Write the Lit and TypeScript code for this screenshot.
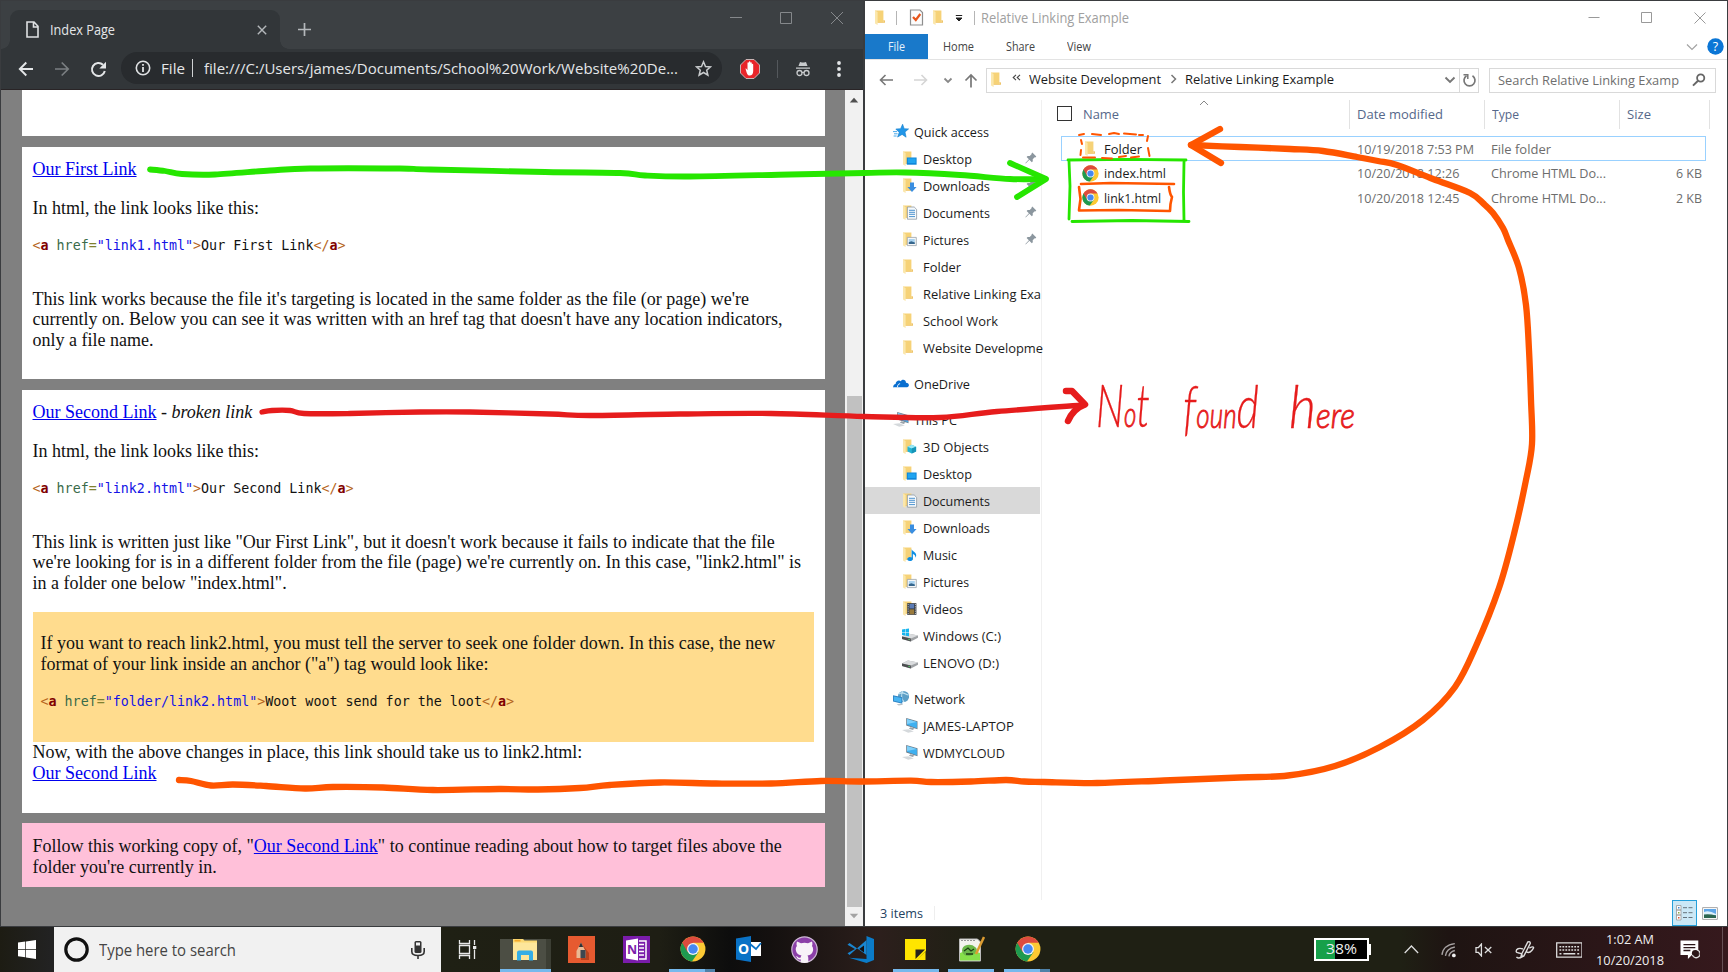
import { LitElement, html, svg, css, nothing } from "lit";
import { customElement, property } from "lit/decorators.js";

/** Single line of text, condensed or stretched to a given width. */
@customElement("fit-text")
class FitText extends LitElement {
  @property() text = "";
  @property({ type: Number }) w = 0;
  static styles = css`
    :host { display: inline-block; white-space: nowrap; flex: none; }
    span { display: inline-block; transform-origin: 0 50%; }
  `;
  updated() {
    const s = this.renderRoot.querySelector("span") as HTMLElement;
    const n = s.getBoundingClientRect().width;
    if (this.w && n) {
      s.style.transform = `scaleX(${this.w / n})`;
      this.style.width = `${this.w}px`;
    }
  }
  render() { return html`<span>${this.text}</span>`; }
}

const ft = (text: string, w: number) => html`<fit-text .text=${text} .w=${w}></fit-text>`;

const folderShape = svg`
  <path d="M1 1.500h8.400v11.800H1z" fill="#f6d277"/>
  <path d="M1 1.500l2.600 1.400v13L1 14.400z" fill="#fbe7ac"/>
  <path d="M9.400 11l1.600.4v2.400H3.600v-.8h5.800z" fill="#eec468"/>`;

const overlays: Record<string, unknown> = {
  folder: nothing,
  desktop: svg`<path d="M4.800 7.500h9.800v7.200H4.800z" fill="#0d84d8"/><path d="M5.800 8.400h7.800v4.700H5.800z" fill="#20a4f0"/>`,
  downloads: svg`<path d="M8 5.600h4V10h2.600L10 15 5.400 10H8z" fill="#3a8ee0"/>`,
  documents: svg`<path d="M5.400 3h6.800l2.400 2.400v9.800H5.400z" fill="#f7fafc" stroke="#8b98a3" stroke-width=".8"/><path d="M7 6.300h6M7 8.300h6M7 10.300h6M7 12.600h6" stroke="#4c93cf" stroke-width="1"/>`,
  pictures: svg`<path d="M5.300 6.400h9v8.200h-9z" fill="#f7f7f7" stroke="#9aa3aa" stroke-width=".8"/><path d="M6.800 8h6v5h-6z" fill="#a9d2ef"/><path d="M6.800 13v-1.700l2.500-1 3.500 1.200V13z" fill="#35658c"/>`,
  objects: svg`<path d="M5.500 8.800l4.300-2 4.300 2v4.600l-4.300 2-4.300-2z" fill="#22b3d4"/><path d="M5.500 8.800l4.300 1.600 4.300-1.600-4.300-2z" fill="#9be8f4"/><path d="M9.800 10.400l4.300-1.600v4.600l-4.300 2z" fill="#1794b7"/>`,
  music: svg`<path d="M9.600 3c.6 2.600 4.600 3 4.600 6.200 0 1.500-.9 2.400-.9 2.400.4-2-1-3-2.400-3.500v4.600c0 1.500-1.400 2.400-3 2.400s-2.600-.9-2.600-2 1.100-2.100 2.600-2.100c.7 0 1.300.2 1.700.5z" fill="#0d8ee4"/>`,
  videos: svg`<path d="M5.200 3.200h9.200v11.600H5.200z" fill="#30353b"/><path d="M7.400 4h4.800v4.500H7.400z" fill="#5a7bb5"/><path d="M7.400 9.300h4.800v5H7.400z" fill="#9a7a3c"/><path d="M6.200 4v10.500M13.400 4v10.500" stroke="#cfd4d9" stroke-width=".9" stroke-dasharray="1.200 1"/>`,
};

const pcShape = svg`
  <path d="M4.200 1l11.300 3.200v8L4.200 8.400z" fill="#6d7f8d"/>
  <path d="M5 2l9.900 2.900v6.300L5 7.800z" fill="#3fb0f0"/>
  <path d="M5 2l9.900 2.900-9.900 2z" fill="#7fd0fa"/>
  <path d="M8.500 10.200l4 1.400-1.600 1.400-4-1.200z" fill="#9aa3aa"/>
  <path d="M0 13l6.500-.8 5.300 2.200-5.600 1.400z" fill="#d5d9dc"/>`;

const driveShape = svg`
  <path d="M0 9.400L6 6.600l10 1.800v2.400L8.800 14.600 0 12z" fill="#9fa2a5"/>
  <path d="M0 9.400L6 6.600l10 1.800-7.200 3.200z" fill="#dadcde"/>
  <path d="M0 9.400l8.800 2.200v3L0 12z" fill="#4c4e50"/>
  <path d="M6.400 12.300l1.400.4" stroke="#54e06c" stroke-width="1"/>`;

function icon(name: string) {
  const box = (b: unknown) => html`<svg width="16" height="17" viewBox="0 0 16 17">${b}</svg>`;
  switch (name) {
    case "star": return box(svg`<path d="M9.600 1.200l1.600 4.500 4.400.2-3.600 3.100 1.100 5.200-4-2.800-4.500 2.700 1.600-4.700L2.800 6l4.800-.3z" fill="#2196e8" stroke="#1680cc" stroke-width=".6"/><path d="M0 8.600h4M1 10.800h3.600M.6 13h3" stroke="#49a9ea" stroke-width="1"/>`);
    case "cloud": return box(svg`<path d="M.2 12c0-1.700 1-2.700 2.400-2.900C2.800 6 6 4.700 7.800 6.300 9.600 3.600 13 5 13 7.800c1.900 0 2.900 1 2.900 2.500 0 1.100-.8 1.900-1.800 1.900H1.700C.9 12.200.2 12.800.2 12z" fill="#0a6fd0"/><path d="M4.500 12.200c0-2.200 1-3.400 2.600-3.500" stroke="#fff" stroke-width=".9" fill="none"/>`);
    case "pc": return box(pcShape);
    case "winc": return box(svg`${driveShape}<path d="M0 2.600l3-.5v3H0zM3.500 2l3.500-.6v3.700H3.500zM0 5.600h3v3l-3-.5zM3.500 5.600H7v3.600l-3.500-.5z" fill="#16b5ee"/>`);
    case "drive": return box(driveShape);
    case "network": return box(svg`<circle cx="10.500" cy="6.500" r="5.600" fill="#5d9fc6"/><path d="M6 4c3-3 6 0 9.500 1M10 1c-2 3-2 8 1 11" stroke="#c3e3f2" stroke-width="1.100" fill="none"/><path d="M0 5.300l9.300 2v6.500L0 11.400z" fill="#2f84c4"/><path d="M.9 6.400l7.500 1.700v4.500L.9 10.700z" fill="#48b4f2"/><path d="M3.600 14.300l5-.5 1.600 1-4.500.7z" fill="#b7c0c6"/>`);
    default: return box(svg`${folderShape}${overlays[name]}`);
  }
}

const chromeLogo = (size: number) => html`<svg width=${size} height=${size} viewBox="0 0 48 48">
  <circle cx="24" cy="24" r="23" fill="#fcc934"/>
  <path d="M24 24L4.100 12.500A23 23 0 0 0 22 46.900L34 29.800z" fill="#1e9a50"/>
  <path d="M4.100 12.500A23 23 0 0 1 43.900 12.500H24L14 29.700z" fill="#dd4b3e"/>
  <circle cx="24" cy="24" r="11" fill="#f4f4f4"/><circle cx="24" cy="24" r="8.800" fill="#4688f1"/></svg>`;

const pin = html`<svg class="pin" width="12" height="12" viewBox="0 0 12 12"><path d="M7.300.6l4 4-1 .8-.6-.1-2 2 .1 2-1 1-2.400-2.500L.7 11.400l-.3-.3 3.500-3.800L1.600 5l1-1 2.100.1 2-2-.2-.7z" fill="#8b969e"/></svg>`;

type Nav = { t: string; w: number; i: string; top?: boolean; pin?: boolean; sel?: boolean };
const groups: Nav[][] = [
  [
    { t: "Quick access", w: 75, i: "star", top: true },
    { t: "Desktop", w: 49, i: "desktop", pin: true },
    { t: "Downloads", w: 67, i: "downloads", pin: true },
    { t: "Documents", w: 67, i: "documents", pin: true },
    { t: "Pictures", w: 46, i: "pictures", pin: true },
    { t: "Folder", w: 38, i: "folder" },
    { t: "Relative Linking Exa", w: 118, i: "folder" },
    { t: "School Work", w: 75, i: "folder" },
    { t: "Website Developme", w: 120, i: "folder" },
  ],
  [{ t: "OneDrive", w: 56, i: "cloud", top: true }],
  [
    { t: "This PC", w: 43, i: "pc", top: true },
    { t: "3D Objects", w: 66, i: "objects" },
    { t: "Desktop", w: 49, i: "desktop" },
    { t: "Documents", w: 67, i: "documents", sel: true },
    { t: "Downloads", w: 67, i: "downloads" },
    { t: "Music", w: 34, i: "music" },
    { t: "Pictures", w: 46, i: "pictures" },
    { t: "Videos", w: 40, i: "videos" },
    { t: "Windows (C:)", w: 78, i: "winc" },
    { t: "LENOVO (D:)", w: 76, i: "drive" },
  ],
  [
    { t: "Network", w: 51, i: "network", top: true },
    { t: "JAMES-LAPTOP", w: 91, i: "pc" },
    { t: "WDMYCLOUD", w: 82, i: "pc" },
  ],
];

@customElement("browser-window")
class BrowserWindow extends LitElement {
  static styles = css`
    :host { display: flex; flex-direction: column; box-sizing: border-box; width: 865px; height: 927px; border: solid #3a3c3f; border-width: 1px 2px 1px 1px; background: #808080; font-family: "Open Sans", "Noto Sans", sans-serif; color: #e4e6e8; }
    svg { display: block; flex: none; }
    .tabs { display: flex; height: 48px; background: #3c4043; flex: none; }
    .tab { display: flex; align-items: center; width: 246px; height: 39px; margin: 9px 0 0 9px; padding: 0 12px 0 12px; background: #323639; border-radius: 9px 9px 0 0; position: relative; box-sizing: content-box; }
    .tab::before, .tab::after { content: ""; position: absolute; bottom: 0; width: 9px; height: 9px; }
    .tab::before { left: -9px; background: radial-gradient(circle at 0 0, transparent 8.500px, #323639 9px); }
    .tab::after { right: -9px; background: radial-gradient(circle at 100% 0, transparent 8.500px, #323639 9px); }
    .tab fit-text { margin-left: 11px; font-size: 14px; }
    .grow { flex: 1; }
    .xtab { margin-right: 1px; }
    .plus { margin: 22px 0 0 18px; }
    .ctl { display: flex; gap: 36px; padding: 9px 18px 0 0; }
    .bar { display: flex; align-items: center; height: 40px; background: #323639; border-bottom: 1px solid #292426; flex: none; padding-left: 17px; }
    .omni { display: flex; align-items: center; height: 32px; width: 577px; margin: 0 0 2px 14px; padding: 0 10px 0 14px; border-radius: 16px; background: #282b2e; font-size: 15px; }
    .omni .f1 { margin-left: 10px; }
    .pipe { width: 1px; height: 18px; background: #d0d2d4; margin: 0 11px 0 7px; }
    .sep { width: 1px; height: 18px; background: #54585c; margin: 0 17px; }
    .view { display: flex; flex: 1; min-height: 0; overflow: hidden; }
    .page { flex: 1; padding: 0 20px 0 21px; font-family: "Liberation Serif", serif; font-size: 18px; line-height: 20.800px; color: #111; }
    .card { background: #fff; box-sizing: border-box; padding: 12px 10px 0 10.500px; margin-bottom: 11px; white-space: nowrap; }
    .c0 { height: 46px; }
    .c1 { height: 232px; }
    .c2 { height: 423px; margin-bottom: 10px; }
    .c3 { height: 64px; background: #ffc0d9; padding-top: 13px; }
    p { margin: 0 0 18px; }
    a { color: #0000ee; text-decoration: underline; }
    pre { margin: 0; font: 13.340px/16px "DejaVu Sans Mono", monospace; padding: 1px 0 35px; }
    .br { color: #b5651d; } .tg { color: #800000; font-weight: bold; } .at { color: #3a6b4a; } .eq { color: #808030; } .st { color: #1414e6; }
    .tip { background: #ffdc8e; height: 130.500px; margin: 0 1px 0 0; padding: 21px 8px 0; box-sizing: border-box; }
    .sb { display: flex; flex-direction: column; width: 18px; background: #f1f1f1; align-items: center; }
    .thumb { width: 15px; height: 511px; background: #c1c1c1; margin-top: auto; }
    .up { margin-top: 7px; } .down { margin: 6px 0 7px; }
  `;
  code(file: string, text: string) {
    return html`<pre><span class="br">&lt;</span><span class="tg">a</span> <span class="at">href</span><span class="eq">=</span><span class="st">"${file}"</span><span class="br">&gt;</span>${text}<span class="br">&lt;/</span><span class="tg">a</span><span class="br">&gt;</span></pre>`;
  }
  render() {
    return html`
      <div class="tabs">
        <div class="tab">
          <svg style="margin-left:4px" width="13" height="17" viewBox="0 0 13 17"><path d="M1 1h7l4 4.300V16H1zM7.500 1v5H12" fill="none" stroke="#dfe1e3" stroke-width="1.600"/></svg>
          ${ft("Index Page", 65)}<span class="grow"></span>
          <svg class="xtab" width="10" height="10" viewBox="0 0 10 10"><path d="M.8.8l8.400 8.400M9.200.8L.8 9.200" stroke="#b4b8bb" stroke-width="1.400"/></svg>
        </div>
        <svg class="plus" width="13" height="13" viewBox="0 0 13 13"><path d="M6.500 0v13M0 6.500h13" stroke="#b4b8bb" stroke-width="1.700"/></svg>
        <span class="grow"></span>
        <div class="ctl">
          <svg width="14" height="16" viewBox="0 0 14 16"><path d="M1 7.500h12" stroke="#85888b"/></svg>
          <svg width="14" height="16" viewBox="0 0 14 16"><path d="M1.500 2.500h11v11h-11z" fill="none" stroke="#85888b"/></svg>
          <svg width="16" height="16" viewBox="0 0 16 16"><path d="M2 2l12 12M14 2L2 14" stroke="#85888b"/></svg>
        </div>
      </div>
      <div class="bar">
        <svg width="16" height="16" viewBox="0 0 16 16"><path d="M15 8H2M8.300 1.500L1.800 8l6.500 6.500" fill="none" stroke="#e4e6e8" stroke-width="1.900"/></svg>
        <svg style="margin-left:20px" width="16" height="16" viewBox="0 0 16 16"><path d="M1 8h13M7.700 1.500L14.200 8l-6.500 6.500" fill="none" stroke="#7b7f82" stroke-width="1.700"/></svg>
        <svg style="margin-left:20px" width="17" height="17" viewBox="0 0 17 17"><path d="M14.800 10A6.500 6.500 0 1 1 13 3.800" fill="none" stroke="#e4e6e8" stroke-width="2"/><path d="M16 .8v6.700H9.300z" fill="#e4e6e8"/></svg>
        <div class="omni">
          <svg width="16" height="16" viewBox="0 0 16 16"><circle cx="8" cy="8" r="6.700" fill="none" stroke="#dfe1e3" stroke-width="1.600"/><path d="M8 7v5M8 4v1.700" stroke="#dfe1e3" stroke-width="1.800"/></svg>
          <span class="f1">${ft("File", 24)}</span><span class="pipe"></span>
          ${ft("file:///C:/Users/james/Documents/School%20Work/Website%20De...", 474)}
          <span class="grow"></span>
          <svg width="17" height="17" viewBox="0 0 17 17"><path d="M8.500 1.800l2 4.700 5 .4-3.800 3.300 1.200 5-4.400-2.700-4.400 2.700 1.200-5L1.500 6.900l5-.4z" fill="none" stroke="#c8cbcd" stroke-width="1.500"/></svg>
        </div>
        <svg style="margin-left:18px" width="20" height="20" viewBox="0 0 20 20"><path d="M6 .5h8L19.500 6v8L14 19.500H6L.5 14V6z" fill="#e8252a" stroke="#c9b5b5"/><path d="M5.500 9.500c1-.5 1.500 1 2 1.700V4c0-1 1.300-1 1.400 0v4-5c0-1 1.400-1 1.500 0v5-4c0-1 1.400-1 1.400 0v4.500-3c0-1 1.400-1 1.400 0V12c0 3-1.400 4.600-3.500 4.600S6.800 14.500 5.500 9.500z" fill="#fff"/></svg>
        <span class="sep"></span>
        <svg width="16" height="16" viewBox="0 0 16 16"><path d="M5 1l2 .5h2L11 1l1.500 4h-9zM1 6.500h14v1.200H1z" fill="#c8cbcd"/><circle cx="4.500" cy="12" r="2.500" fill="none" stroke="#c8cbcd" stroke-width="1.300"/><circle cx="11.500" cy="12" r="2.500" fill="none" stroke="#c8cbcd" stroke-width="1.300"/><path d="M7 11.500h2" stroke="#c8cbcd"/></svg>
        <svg style="margin-left:25px" width="6" height="18" viewBox="0 0 6 18"><g fill="#e4e6e8"><circle cx="3" cy="3" r="1.900"/><circle cx="3" cy="9" r="1.900"/><circle cx="3" cy="15" r="1.900"/></g></svg>
      </div>
      <div class="view">
        <div class="page">
          <div class="card c0"></div>
          <div class="card c1">
            <p><a>Our First Link</a></p>
            <p>In html, the link looks like this:</p>
            ${this.code("link1.html", "Our First Link")}
            <p>This link works because the file it's targeting is located in the same folder as the file (or page) we're<br>currently on. Below you can see it was written with an href tag that doesn't have any location indicators,<br>only a file name.</p>
          </div>
          <div class="card c2">
            <p><a>Our Second Link</a> - <i>broken link</i></p>
            <p>In html, the link looks like this:</p>
            ${this.code("link2.html", "Our Second Link")}
            <p>This link is written just like "Our First Link", but it doesn't work because it fails to indicate that the file<br>we're looking for is in a different folder from the file (page) we're currently on. In this case, "link2.html" is<br>in a folder one below "index.html".</p>
            <div class="tip">
              <p>If you want to reach link2.html, you must tell the server to seek one folder down. In this case, the new<br>format of your link inside an anchor ("a") tag would look like:</p>
              ${this.code("folder/link2.html", "Woot woot send for the loot")}
            </div>
            <div>Now, with the above changes in place, this link should take us to link2.html:</div>
            <div><a>Our Second Link</a></div>
          </div>
          <div class="card c3">Follow this working copy of, "<a>Our Second Link</a>" to continue reading about how to target files above the<br>folder you're currently in.</div>
        </div>
        <div class="sb">
          <svg class="up" width="10" height="6" viewBox="0 0 10 6"><path d="M.8 5.500L5 .8l4.200 4.700z" fill="#505050"/></svg>
          <div class="thumb"></div>
          <svg class="down" width="10" height="6" viewBox="0 0 10 6"><path d="M.8.8h8.400L5 5.300z" fill="#a3a3a3"/></svg>
        </div>
      </div>`;
  }
}

@customElement("explorer-window")
class ExplorerWindow extends LitElement {
  static styles = css`
    :host { display: flex; flex-direction: column; box-sizing: border-box; width: 863px; height: 927px; background: #fff; border: solid #3a3c3f; border-width: 1px 1px 1px 0; font: 13.500px/18px "Open Sans", "Noto Sans", sans-serif; color: #1c1c1c; }
    svg { display: block; flex: none; }
    .grow { flex: 1; }
    .title { display: flex; align-items: center; height: 33px; padding: 0 15px 0 9px; flex: none; color: #a0a0a0; font-size: 14px; }
    .v { width: 1px; height: 14px; background: #b5b5b5; }
    .ribbon { display: flex; align-items: center; height: 25px; border-bottom: 1px solid #e3e3e3; flex: none; font-size: 12.500px; color: #444; }
    .ribbon fit-text { padding-top: 1px; }
    .file { display: flex; align-items: center; justify-content: center; width: 63px; height: 25px; background: #1979ca; color: #e6f2fb; }
    .addr { display: flex; align-items: center; height: 40px; flex: none; padding: 0 11px 0 13px; }
    .addr fit-text { padding-bottom: 2px; }
    .box { display: flex; align-items: center; height: 23px; border: 1px solid #d9d9d9; }
    .path { width: 491px; margin-left: 8px; }
    .search { width: 225px; margin-left: 10px; color: #6f6f6f; }
    .search fit-text { padding-bottom: 0; }
    .refresh { display: flex; align-items: center; justify-content: center; width: 18px; height: 23px; border-left: 1px solid #d9d9d9; }
    .main { display: flex; flex: 1; min-height: 0; }
    .nav { width: 175px; box-sizing: border-box; padding-top: 18px; margin-right: 1px; flex: none; }
    .group { margin-bottom: 9px; }
    .item { display: flex; align-items: center; height: 27px; padding-left: 37px; gap: 5px; position: relative; }
    .top { padding-left: 28px; }
    .sel { background: #d9d9d9; }
    .pin { position: absolute; left: 160px; top: 7px; }
    .list { flex: 1; border-left: 1px solid #f0f0f0; }
    .head { display: grid; grid-template-columns: 308px 135px 135px 90px; height: 29px; color: #56688a; }
    .cell { border-right: 1px solid #e2e2e2; padding: 5px 0 0 7px; box-sizing: border-box; position: relative; }
    .name { display: flex; padding-left: 15px; align-items: flex-start; gap: 11px; }
    .chk { width: 13px; height: 13px; border: 1px solid #333; margin-top: 1px; }
    .sort { position: absolute; left: 157px; top: 0; }
    .rows { padding: 7px 0 0 19px; color: #6d6d6d; }
    .row { display: grid; grid-template-columns: 22px 253px 134px 125px 1fr; width: 645px; height: 24.500px; box-sizing: border-box; padding: 1px 4px 0 21px; align-items: center; }
    .row.focus { box-shadow: inset 0 0 0 1px #99d1ff; }
    .nm { color: #1c1c1c; }
    .kb { justify-self: end; }
    .status { display: flex; align-items: center; height: 26px; flex: none; padding: 0 9px 0 15px; color: #24425f; }
    .view1 { display: flex; align-items: center; justify-content: center; width: 23px; height: 24px; border: 1px solid #26a0da; background: #cbe8f6; margin-right: 5px; }
  `;
  row(ic: unknown, n: string, nw: number, d: string, dw: number, t: string, tw: number, s: string, focus = false) {
    return html`<div class="row ${focus ? "focus" : ""}">${ic}<span class="nm">${ft(n, nw)}</span>${ft(d, dw)}${ft(t, tw)}${s ? html`<span class="kb">${ft(s, 26)}</span>` : nothing}</div>`;
  }
  render() {
    return html`
      <div class="title">
        ${icon("folder")}<span class="v" style="margin-left:6px"></span>
        <svg style="margin-left:12px" width="15" height="17" viewBox="0 0 15 17"><path d="M1.500 1h9.500l2.500 2.500V16h-12z" fill="#fcfcfc" stroke="#8e8e8e" stroke-width="1.200"/><path d="M4 8l2.800 3L11.300 5" fill="none" stroke="#e8561c" stroke-width="2.200"/></svg>
        <span style="margin-left:8px">${icon("folder")}</span>
        <svg style="margin-left:7px" width="8" height="8" viewBox="0 0 8 8"><path d="M.8 1.500h6.400M1 4h6L4 7z" stroke="#222" stroke-width="1" fill="#222"/></svg>
        <span class="v" style="margin:0 6px 0 11px"></span>${ft("Relative Linking Example", 148)}
        <span class="grow"></span>
        <svg width="12" height="12" viewBox="0 0 12 12"><path d="M.5 5.500h11" stroke="#999"/></svg>
        <svg style="margin-left:40px" width="13" height="13" viewBox="0 0 13 13"><path d="M1.500 1.500h10v10h-10z" fill="none" stroke="#999"/></svg>
        <svg style="margin-left:41px;margin-right:6px" width="12" height="12" viewBox="0 0 12 12"><path d="M.5.5l11 11M11.500.5l-11 11" stroke="#999"/></svg>
      </div>
      <div class="ribbon">
        <div class="file">${ft("File", 17)}</div>
        <span style="margin-left:15px">${ft("Home", 31)}</span><span style="margin-left:32px">${ft("Share", 29)}</span><span style="margin-left:32px">${ft("View", 24)}</span>
        <span class="grow"></span>
        <svg width="12" height="8" viewBox="0 0 12 8"><path d="M1 1.500l5 5 5-5" fill="none" stroke="#a3a3a3" stroke-width="1.200"/></svg>
        <svg style="margin:0 3px 0 9px" width="17" height="17" viewBox="0 0 17 17"><circle cx="8.500" cy="8.500" r="8.200" fill="#0b76d6"/><text x="8.500" y="13" text-anchor="middle" font-size="12.500" fill="#fff">?</text></svg>
      </div>
      <div class="addr">
        <svg width="16" height="14" viewBox="0 0 16 14"><path d="M15 7H2.500M7.500 2l-5 5 5 5" fill="none" stroke="#777" stroke-width="1.600"/></svg>
        <svg style="margin-left:19px" width="16" height="14" viewBox="0 0 16 14"><path d="M1 7h12.500M8.500 2l5 5-5 5" fill="none" stroke="#d5d5d5" stroke-width="1.600"/></svg>
        <svg style="margin-left:14px" width="10" height="7" viewBox="0 0 10 7"><path d="M1.500 1.500L5 5l3.500-3.500" fill="none" stroke="#888" stroke-width="1.800"/></svg>
        <svg style="margin-left:11px" width="14" height="15" viewBox="0 0 14 15"><path d="M7 14.500V2M1.500 7.500L7 2l5.500 5.500" fill="none" stroke="#777" stroke-width="1.700"/></svg>
        <div class="box path">
          <span style="margin:-2px 0 0 3px">${icon("folder")}</span>
          <svg style="margin:-5px 8px 0 6px" width="9" height="7" viewBox="0 0 9 7"><path d="M4 .8L1.200 3.500 4 6.200M8 .8L5.200 3.500 8 6.200" fill="none" stroke="#444" stroke-width="1.100"/></svg>
          ${ft("Website Development", 132)}
          <svg style="margin:-2px 8px 0 9px" width="7" height="10" viewBox="0 0 7 10"><path d="M1.500 1l4 4-4 4" fill="none" stroke="#777" stroke-width="1.500"/></svg>
          ${ft("Relative Linking Example", 149)}
          <span class="grow"></span>
          <svg style="margin-right:3px" width="12" height="8" viewBox="0 0 12 8"><path d="M1.500 1.500L6 6l4.500-4.500" fill="none" stroke="#777" stroke-width="1.900"/></svg>
          <span class="refresh"><svg width="15" height="15" viewBox="0 0 15 15"><path d="M10.500 2.800a5.500 5.500 0 1 1-6 0" fill="none" stroke="#777" stroke-width="1.700"/><path d="M1.500 1.800h4.300V6" fill="none" stroke="#777" stroke-width="1.500"/></svg></span>
        </div>
        <div class="box search"><span style="margin-left:8px">${ft("Search Relative Linking Examp", 181)}</span><span class="grow"></span>
          <svg style="margin-right:9px" width="14" height="14" viewBox="0 0 14 14"><circle cx="8.700" cy="5" r="3.600" fill="none" stroke="#666" stroke-width="1.800"/><path d="M6 7.800L1 12.600" stroke="#666" stroke-width="2"/></svg>
        </div>
      </div>
      <div class="main">
        <div class="nav">${groups.map((g) => html`<div class="group">${g.map((n) => html`
          <div class="item ${n.top ? "top" : ""} ${n.sel ? "sel" : ""}">${icon(n.i)}${ft(n.t, n.w)}${n.pin ? pin : nothing}</div>`)}</div>`)}</div>
        <div class="list">
          <div class="head">
            <div class="cell name"><span class="chk"></span>${ft("Name", 36)}
              <svg class="sort" width="10" height="6" viewBox="0 0 10 6"><path d="M1 5l4-4 4 4" fill="none" stroke="#888"/></svg></div>
            <div class="cell">${ft("Date modified", 86)}</div><div class="cell">${ft("Type", 27)}</div><div class="cell">${ft("Size", 24)}</div>
          </div>
          <div class="rows">
            ${this.row(html`<span style="margin-left:2px">${icon("folder")}</span>`, "Folder", 38, "10/19/2018 7:53 PM", 117, "File folder", 60, "", true)}
            ${this.row(chromeLogo(17), "index.html", 62, "10/20/2018 12:26", 102.5, "Chrome HTML Do...", 115, "6 KB")}
            ${this.row(chromeLogo(17), "link1.html", 57, "10/20/2018 12:45", 102.5, "Chrome HTML Do...", 115, "2 KB")}
          </div>
        </div>
      </div>
      <div class="status">${ft("3 items", 43)}<span class="v" style="margin-left:11px;background:#eee"></span><span class="grow"></span>
        <div class="view1"><svg width="17" height="16" viewBox="0 0 17 16"><path d="M.5.5h4.500v4.500H.5zM.5 5h4.500v5H.5zM.5 10h4.500v5H.5z" fill="#fff" stroke="#999" stroke-width=".8"/><path d="M2 2h1.500v1.500H2z" fill="#48c"/><path d="M2 7h1.500v1.500H2z" fill="#8a4"/><path d="M2 12h1.500v1.500H2z" fill="#d53"/><path d="M7 2.700h4M12.500 2.700h4M7 7.700h4M12.500 7.700h4M7 12.500h4M12.500 12.500h4" stroke="#67737c"/></svg></div>
        <svg width="16" height="13" viewBox="0 0 16 13"><path d="M.6.6h14.800v11.800H.6z" fill="#fff" stroke="#a8a8a8"/><path d="M2 2h12v9H2z" fill="#5ea6e8"/><path d="M2 5q5-2 12 2v1H2z" fill="#dbeffa"/><path d="M2 7.500q5-1 12 1V11H2z" fill="#2c6650"/></svg>
      </div>`;
  }
}

@customElement("task-bar")
class TaskBar extends LitElement {
  static styles = css`
    :host { display: flex; height: 45px; width: 1728px; color: #eee; font-family: "Open Sans", "Noto Sans", sans-serif;
      background: linear-gradient(90deg, #1d1c13 0, #222222 50px, #1f2014 440px, #1e1e14 660px, #0d0d0d 730px, #14100f 770px, #2c1f1c 880px, #1f2014 970px, #1f2014 1400px, #1e1412 1450px, #2b1618 1600px, #36191d 1728px); }
    svg { display: block; }
    .start { width: 54px; padding: 13px 0 0 18px; box-sizing: border-box; }
    .search { display: flex; align-items: center; width: 387px; box-sizing: border-box; background: #f1f1f1; color: #444; font-size: 15.500px; padding: 0 15px 0 9px; }
    .search fit-text { margin-left: 9px; }
    .grow { flex: 1; }
    .app { position: relative; display: flex; align-items: center; justify-content: center; width: 56px; height: 45px; box-sizing: border-box; padding: 0 0 1px 1px; }
    .run::after { content: ""; position: absolute; left: 5px; width: 46px; bottom: 0; height: 3px; background: #76b9ed; }
    .multi::after { background: linear-gradient(90deg, #76b9ed 36px, #4e81a8 36px); }
    .act { background: linear-gradient(90deg, transparent 3px, #4c4e44 3px, #4c4e44 49px, #3c3e34 49px, #3c3e34 54px, transparent 54px); background-size: 100% 33px; background-position: 0 12px; background-repeat: no-repeat; }
    .act::after { left: 3px; width: 51px; }
    .apps { display: flex; margin-left: 20px; width: 558px; }
    .tray { display: flex; align-items: center; margin-left: 259px; width: 413px; }
    .bat { display: flex; align-items: center; justify-content: center; position: relative; width: 52px; height: 19px; border: 2px solid #fff; background: linear-gradient(90deg, #16a04a 38%, #000 38%); font-size: 15px; line-height: 17px; box-sizing: content-box; }
    .bat fit-text { margin-top: -2px; }
    .bat::after { content: ""; position: absolute; right: -4px; top: 4px; width: 2px; height: 11px; background: #fff; }
    .time { display: flex; flex-direction: column; align-items: center; width: 68px; font-size: 13.500px; line-height: 20.500px; margin-left: 14px; }
    .end { width: 4px; height: 45px; border-left: 1px solid #665055; margin-left: 22px; }
  `;
  render() {
    const app = (cls: string, b: unknown) => html`<div class="app ${cls}">${b}</div>`;
    return html`
      <div class="start"><svg width="18" height="19" viewBox="0 0 18 19"><path d="M0 2.600l7.300-1v7.500H0zM8 1.500L18 0v9.100H8zM0 9.800h7.300v7.500l-7.300-1zM8 9.800h10V19L8 17.500z" fill="#fff"/></svg></div>
      <div class="search">
        <svg width="27" height="27" viewBox="0 0 27 27"><circle cx="13.500" cy="13.500" r="10.700" fill="none" stroke="#111" stroke-width="3.200"/></svg>
        ${ft("Type here to search", 137)}<span class="grow"></span>
        <svg width="16" height="20" viewBox="0 0 16 20"><rect x="4.500" y="1" width="7" height="12" rx="1.500" fill="#333"/><path d="M6 2.500h4v3H6z" fill="#f1f1f1"/><path d="M1.800 8v3.500q0 4 6.200 4t6.200-4V8M8 15.500V19" fill="none" stroke="#333" stroke-width="1.600"/></svg>
      </div>
      <svg style="margin:13px 0 0 17px" width="19" height="19" viewBox="0 0 19 19"><g fill="none" stroke="#e8e8e8" stroke-width="1.300"><path d="M1.500 0v3.500h10V0M1.500 19v-3.500h10V19M1.500 5.500h10v8h-10zM16.500 0v5M16.500 9.500V19"/></g><path d="M15 6h3.300v3H15z" fill="#e8e8e8"/></svg>
      <div class="apps">
        ${app("run act", html`<svg width="26" height="23" viewBox="0 0 26 23"><path d="M1 1h10l1.500 1.500H25V22H1z" fill="#fbd975"/><path d="M1 4.500h24V22H1z" fill="#fde69b"/><path d="M2.500 1.800h6v1.700h-6z" fill="#f4a92a"/><path d="M5 22.500v-8q0-2 2-2h12q2 0 2 2v8h-4v-5.500H9v5.500z" fill="#35aee6"/></svg>`)}
        ${app("", html`<svg width="27" height="27" viewBox="0 0 27 27"><path d="M0 0h27v27H0z" fill="#e65a30"/><path d="M13 7l8 10v7h-8z" fill="#b8421d"/><path d="M13 6.500L8.500 15v7h9v-7z" fill="#eab893"/><path d="M13 6.500L10.800 11h4.300z" fill="#2c3338"/><path d="M12.500 14h5v8h-5z" fill="#3d4750"/></svg>`)}
        ${app("", html`<svg width="27" height="27" viewBox="0 0 27 27"><path d="M0 0h27v27H0z" fill="#7a1cab"/><path d="M3 4.500l12-2v22l-12-2z" fill="#fff"/><path d="M16 5h7v18h-7" fill="none" stroke="#fff" stroke-width="1.500"/><path d="M16 8.500h5M16 12h5M16 15.500h5M16 19h5" stroke="#fff" stroke-width="1.500"/><text x="9" y="18" font-size="12.500" font-weight="bold" fill="#7a1cab" text-anchor="middle">N</text></svg>`)}
        ${app("run multi", chromeLogo(26))}
        ${app("", html`<svg width="26" height="26" viewBox="0 0 26 26"><path d="M14 6h11v14H14z" fill="#fff"/><path d="M14 8l6 5 5-6" fill="none" stroke="#0a72c6" stroke-width="1.800"/><path d="M0 2.500L15 0v26L0 23.500z" fill="#0a72c6"/><text x="7.500" y="18" font-size="14" font-weight="bold" fill="#fff" text-anchor="middle">O</text></svg>`)}
        ${app("", html`<svg width="27" height="27" viewBox="0 0 27 27"><circle cx="13.500" cy="13.500" r="12.700" fill="#8b3fa8" stroke="#cbb8d2" stroke-width="1.200"/><path d="M6 5.500l4 1.700q3.500-1 7 0l4-1.700q.8 2.500 0 4.500 1.500 2 1 4.700-.8 4-5.500 4.800.8 1 .8 2.500v4.300q-3.800 1.200-7.600 0v-3c-3.500 1-3.200-2-5-3 2-.7 2.600 2.500 5 1.300 0-1 .3-1.500.8-2.100-4.700-.8-5.500-4-5.800-6.200q0-2 1.200-3.300-.8-2 .1-4.500z" fill="#f7f2f8"/></svg>`)}
        ${app("", html`<svg width="27" height="27" viewBox="0 0 27 27"><path d="M19.500 0L27 3v21l-7.500 3L2 21.800l17.500 1.200z" fill="#0b7bc8"/><path d="M19.500 4v15L2.500 7 .5 8.800 8 13l-7.500 4.300L2.500 19z" fill="#1a86d0"/><path d="M17 9.500v7L12.200 13z" fill="#15100f"/></svg>`)}
        ${app("run", html`<svg width="21" height="21" viewBox="0 0 21 21"><path d="M0 0h21v12l-9 9H0z" fill="#ffe500"/><path d="M10.500 10.500H20L10.500 20z" fill="#24211c"/><path d="M20.500 12.500V21h-9z" fill="#ffe500"/></svg>`)}
        ${app("run", html`<svg width="27" height="27" viewBox="0 0 27 27"><path d="M1.500 3h18l3 3v19h-21z" fill="#f3f3ee" stroke="#bbb"/><path d="M2 17q9-5 20 0v7.500H2z" fill="#86e04a"/><path d="M4 15q0-5 5-6t8 2q3 2 1 5t-7 4q-6 0-7-5z" fill="#6cb84a"/><path d="M6 15l4-3 3 3 3-2M8 18h7" stroke="#1c3d12" stroke-width="1.300" fill="none"/><path d="M3 4.500h15" stroke="#999" stroke-dasharray="2 1"/><path d="M26 1l-8 17" stroke="#dc9c31" stroke-width="2.500"/></svg>`)}
        ${app("run multi", chromeLogo(26))}
      </div>
      <div class="tray">
        <div class="bat">${ft("38%", 31)}</div>
        <svg style="margin-left:35px" width="15" height="9" viewBox="0 0 15 9"><path d="M.7 8l6.800-7 6.800 7" fill="none" stroke="#ddd" stroke-width="1.300"/></svg>
        <svg style="margin-left:22px" width="16" height="16" viewBox="0 0 16 16"><g fill="none" stroke="#a8a3a3" stroke-width="1.400"><path d="M1 13Q2 3 14 1.500M4.500 14Q5.500 6.500 14 5M8 14.500Q8.500 10 14 8.500"/></g><circle cx="13" cy="13.500" r="1.900" fill="#eee"/></svg>
        <svg style="margin-left:18px" width="18" height="14" viewBox="0 0 18 14"><path d="M1 4.500h2.500L6.500 1v12l-3-3.500H1zM10 4l6.500 6M16.500 4L10 10" fill="none" stroke="#ddd" stroke-width="1.300"/></svg>
        <svg style="margin-left:22px" width="20" height="20" viewBox="0 0 20 20"><path d="M6.500 14.500L13 1.800q2.500-.8 2.500 1.500L9 16l-3 1.500zM8 9c-4-1.500-7 0-6.800 2.500s5 .5 5.800 3-4 5-5.500 2.500M11.500 12q3 1.500 5.500-1.500t1.500-3.500-4 1" fill="none" stroke="#ddd" stroke-width="1.400"/></svg>
        <svg style="margin-left:21px" width="27" height="16" viewBox="0 0 27 16"><path d="M.7.7h25.600v14.600H.7z" fill="none" stroke="#ddd" stroke-width="1.300"/><path d="M3.500 4.800h20M3.500 8h20" stroke="#ddd" stroke-width="1.500" stroke-dasharray="1.800 1.200"/><path d="M3.500 11.800h2M7.500 11.800h12M21.500 11.800h2" stroke="#ddd" stroke-width="1.400"/></svg>
        <div class="time">${ft("1:02 AM", 48)}${ft("10/20/2018", 68)}</div>
        <svg style="margin-left:16px" width="20" height="19" viewBox="0 0 20 19"><path d="M.5.5h18V15H12l-4 4v-4H.5z" fill="#fff"/><path d="M3.500 4.500h12M3.500 7.500h12M3.500 10.500h7" stroke="#2b1618" stroke-width="1.300"/><circle cx="15.500" cy="13.500" r="3.500" fill="#2b1618"/><path d="M17.500 10a4 4 0 1 1-5 5" fill="none" stroke="#ddd" stroke-width="1.300"/></svg>
        <span class="end"></span>
      </div>`;
  }
}

/** Freehand pen marks and note laid over both windows. */
@customElement("ink-layer")
class InkLayer extends LitElement {
  static styles = css`
    :host { position: absolute; inset: 0; pointer-events: none; }
    svg { display: block; }
    .g { stroke: #26e600; } .o { stroke: #ff5500; } .r { stroke: #e61c1c; }
    .note { fill: #e61c1c; stroke: #e61c1c; stroke-width: .9; font-family: Lato, sans-serif; font-style: italic; font-weight: 300; font-size: 36px; }
    .tall { font-size: 60px; stroke-width: .3; }
  `;
  smooth(pts: number[][]) {
    let d = `M${pts[0]}`;
    for (let i = 0; i < pts.length - 1; i++) {
      const p0 = pts[i - 1] ?? pts[i], p1 = pts[i], p2 = pts[i + 1], p3 = pts[i + 2] ?? p2;
      d += `C${p1[0] + (p2[0] - p0[0]) / 6},${p1[1] + (p2[1] - p0[1]) / 6} ${p2[0] - (p3[0] - p1[0]) / 6},${p2[1] - (p3[1] - p1[1]) / 6} ${p2[0]},${p2[1]}`;
    }
    return d;
  }
  render() {
    const green = [[150,169.5],[165,171],[182,174],[215,174.5],[270,170.5],[310,168.5],[400,168.5],[430,169.5],[545,172],[620,173],[645,175.5],[690,176.5],[790,174.5],[864,173],[905,172.5],[960,175],[1010,179],[1044,179]];
    const red = [[262,412],[272,410.5],[290,410.5],[304,413.5],[350,413.5],[420,412],[470,412],[550,414],[590,415.5],[680,414],[771,413.5],[864,416.5],[940,417.5],[997,411.5],[1084,405]];
    const orange = [[179,780],[191,781],[211,785.5],[233,784.5],[266,786],[305,788.5],[333,787],[383,787.5],[433,790],[499,789],[538,789.5],[580,788],[610,785],[660,782.5],[716,783.5],[771,783.5],[821,781],[860,781.5],[911,780.7],[931,782],[971,781.5],[1006,780],[1024,781.5],[1044,782],[1097,783],[1164,780.5],[1240,777.5],[1288,775.5],[1335,766],[1380,747],[1423,720],[1455,687],[1476,646],[1499,588],[1514,534],[1526,480],[1532,444],[1531,400],[1529,350],[1526,305],[1519,268],[1508,240],[1503,228],[1493,213],[1484,204],[1470,193],[1433,179],[1397,165],[1378,161],[1357,157],[1323,151],[1290,149],[1240,147],[1191,145]];
    return html`<svg width="1728" height="972" viewBox="0 0 1728 972" fill="none" stroke-linecap="round" stroke-linejoin="round">
      <g class="g" stroke-width="5.800"><path d=${this.smooth(green)}/><path d="M1010 163L1046 179L1017 197"/></g>
      <g class="g" stroke-width="2.800"><path d="M1068 160l60-.7 58 .7M1069 161l1 25-1 33M1184 162l-.5 30 .5 28M1072 221.500l60-1 57 1"/></g>
      <g class="o" stroke-width="6.300"><path d=${this.smooth(orange)}/><path d="M1220 129L1191 145L1221 163"/></g>
      <g class="o" stroke-width="2.600"><path d="M1081 184l30-1 63 1M1079 187l1.500 12-1.500 11M1079 210.500l40-.5 50 1M1169 187q1 8 3 10-2 7-2 14"/></g>
      <g class="o" stroke-width="2"><path d="M1079 135l5-1M1092 134l9 1M1109 134l5-1 5 1M1124 133.500l12 1M1148 136l-1 5M1148 148l1.500 8M1083 157.500h12M1102 158l10 .5M1119 157l7-1M1131 157.500l8-1M1081 140l1 4M1081 150l-.5 5M1139 135h4"/></g>
      <g class="r" stroke-width="5.300"><path d=${this.smooth(red)}/><path stroke-width="6.500" d="M1066 391L1072 391L1085 404.500Q1073 409 1068 421"/></g>
      <g class="note">
        <text x="1096" y="427" textLength="54" lengthAdjust="spacingAndGlyphs"><tspan class="tall">N</tspan><tspan>o</tspan><tspan class="tall">t</tspan></text>
        <text x="1183" y="428" textLength="76" lengthAdjust="spacingAndGlyphs"><tspan class="tall">f</tspan><tspan>oun</tspan><tspan class="tall">d</tspan></text>
        <text x="1289" y="428" textLength="66" lengthAdjust="spacingAndGlyphs"><tspan class="tall">h</tspan><tspan>ere</tspan></text>
      </g>
    </svg>`;
  }
}

@customElement("app-root")
class AppRoot extends LitElement {
  static styles = css`
    :host { display: block; position: relative; width: 1728px; height: 972px; overflow: hidden; }
    .desk { display: flex; }
  `;
  render() {
    return html`<div class="desk"><browser-window></browser-window><explorer-window></explorer-window></div><task-bar></task-bar><ink-layer></ink-layer>`;
  }
}
